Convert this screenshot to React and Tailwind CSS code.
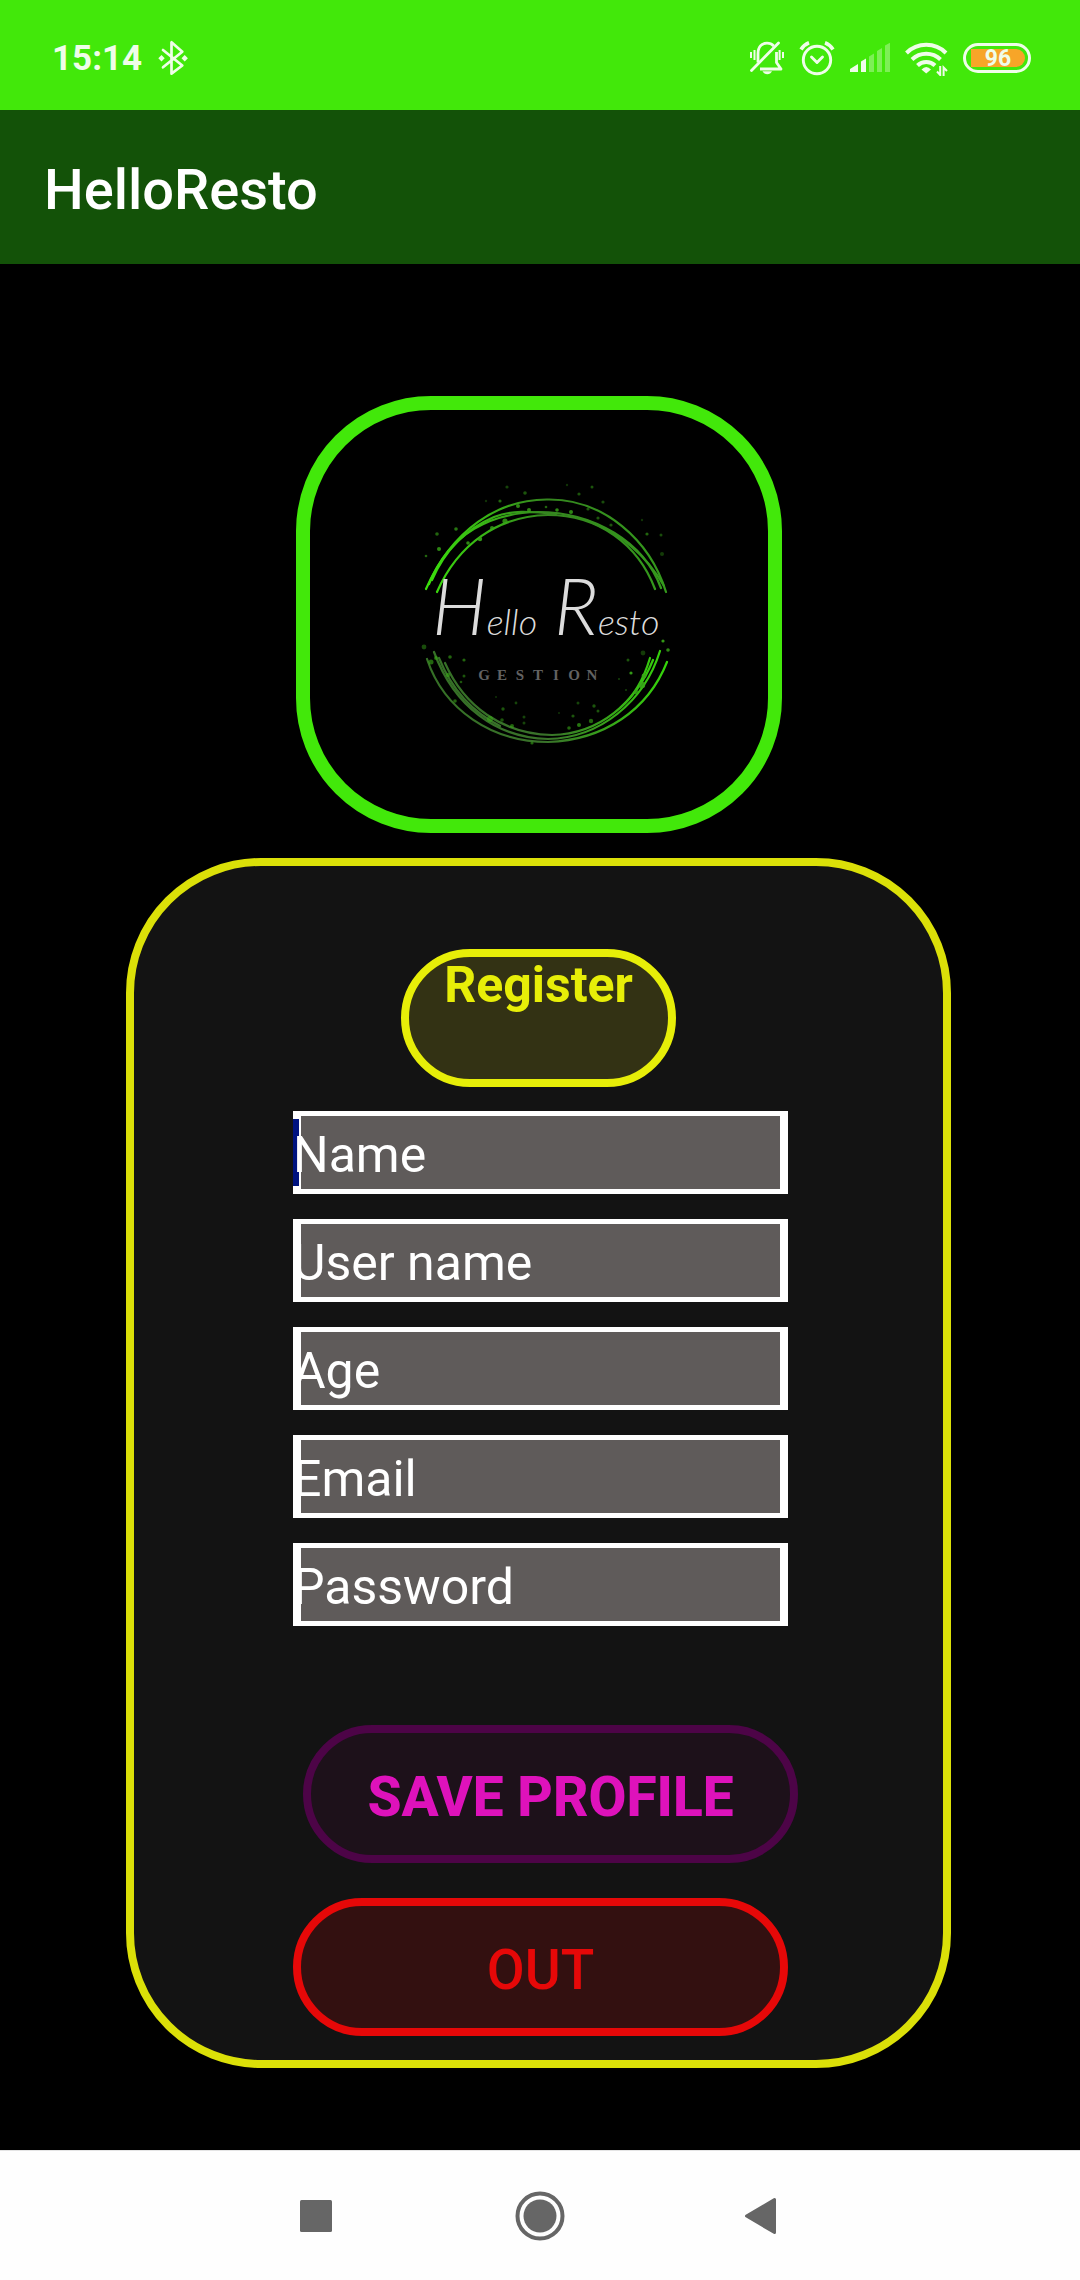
const FIELDS = [
  { id: "name", label: "Name", type: "text", caret: true },
  { id: "username", label: "User name", type: "text" },
  { id: "age", label: "Age", type: "text" },
  { id: "email", label: "Email", type: "email" },
  { id: "password", label: "Password", type: "password" },
];

// Splatter dots round the logo rings: x, y, radius, opacity.
const DOTS = [
  [97, 17, 1.6, 0.4], [115, 23, 1.8, 0.5], [90, 31, 1.6, 0.6], [76, 31, 1.2, 0.3],
  [157, 15, 1.2, 0.3], [182, 17, 1.5, 0.5], [169, 24, 1.6, 0.5], [193, 32, 1.6, 0.45],
  [27, 64, 1.8, 0.6], [46, 59, 1.8, 0.7], [29, 79, 2, 0.8], [16, 86, 1.3, 0.6],
  [232, 50, 1.2, 0.3], [237, 64, 1.6, 0.6], [251, 65, 1.5, 0.45], [252, 84, 2, 0.35],
  [108, 36, 2, 0.8], [119, 40, 2, 0.8], [136, 37, 1.3, 0.6], [147, 40, 1.8, 0.8],
  [161, 42, 2, 0.8], [178, 39, 1.6, 0.5], [188, 48, 1.6, 0.5], [201, 55, 1.6, 0.5],
  [95, 51, 2.6, 0.8], [82, 58, 2, 0.8], [70, 69, 2.2, 0.9], [58, 73, 1.8, 0.8],
  [14, 177, 2.4, 0.45], [26, 188, 2, 0.6], [40, 187, 1.8, 0.6], [54, 190, 1.6, 0.6],
  [38, 205, 2.2, 0.6], [54, 206, 1.5, 0.5], [51, 212, 1.3, 0.5], [21, 192, 2.5, 0.6],
  [253, 171, 1.6, 0.9], [258, 180, 1.8, 0.8], [233, 183, 2.4, 0.35], [218, 190, 1.5, 0.5],
  [221, 203, 1.6, 0.9], [234, 206, 2.4, 0.9], [232, 215, 3.2, 0.9], [226, 222, 2.2, 0.8],
  [209, 209, 1, 0.4], [216, 220, 1, 0.4], [86, 227, 1, 0.3], [106, 233, 1.4, 0.4],
  [93, 239, 1.7, 0.5], [114, 247, 1.5, 0.4], [114, 253, 1.5, 0.4], [80, 249, 3, 0.6],
  [92, 250, 1.8, 0.5], [102, 256, 2, 0.6], [168, 233, 1.5, 0.4], [184, 236, 1.7, 0.5],
  [188, 241, 1.5, 0.5], [163, 246, 1.6, 0.5], [169, 255, 2, 0.7], [181, 251, 2.2, 0.6],
  [159, 258, 1.8, 0.6], [149, 243, 1, 0.3], [122, 273, 1.6, 0.6], [45, 231, 1.8, 0.6],
];

function Logo() {
  return (
    <svg viewBox="0 0 458 409" className="block w-full" role="img" aria-label="Hello Resto Gestion">
      <defs>
        <linearGradient id="topRing" gradientUnits="userSpaceOnUse" x1="16" y1="0" x2="256" y2="0">
          <stop offset="0" stopColor="#3be00c" />
          <stop offset="0.5" stopColor="#35861f" />
          <stop offset="1" stopColor="#349a1c" />
        </linearGradient>
        <linearGradient id="bottomRing" gradientUnits="userSpaceOnUse" x1="16" y1="0" x2="256" y2="0">
          <stop offset="0" stopColor="#357026" />
          <stop offset="0.5" stopColor="#39722a" />
          <stop offset="1" stopColor="#35d40a" />
        </linearGradient>
      </defs>
      <g transform="translate(100 60)">
        <g fill="none" stroke="url(#topRing)" strokeWidth="2.2" strokeLinecap="round">
          <path d="M16 119 C42 60 88 29 138 29.5 C194 29 240 70 256 122" />
          <path d="M19 114 C40 62 82 43 128 42 C184 42 234 72 251 118" />
          <path d="M27 122 C48 74 88 46 138 45 C188 45 228 74 245 119" />
          <path d="M22 110 C36 78 58 58 84 47 C104 39 124 42 146 44" />
          <path d="M176 50 C212 64 238 88 254 116" />
        </g>
        <g fill="none" stroke="url(#bottomRing)" strokeWidth="2.2" strokeLinecap="round">
          <path d="M17 189 C34 240 82 272 138 272 C194 270 238 240 257 192" />
          <path d="M24 182 C44 236 86 268 138 269 C190 268 234 232 250 181" />
          <path d="M35 193 C54 236 92 264 142 265 C190 264 226 232 243 190" />
          <path d="M29 188 C42 220 62 242 90 256" />
          <path d="M240 188 C234 208 224 226 210 238" />
        </g>
        <g fill="#38a918">
          {DOTS.map(([x, y, r, o]) => (
            <circle key={`${x}-${y}`} cx={x} cy={y} r={r} opacity={o} />
          ))}
        </g>
        <g fill="#dcdcdc" fontFamily="Lato, sans-serif" fontStyle="italic" fontWeight="300">
          <text x="22" y="165" fontSize="78">
            H<tspan fontSize="36">ello</tspan>
          </text>
          <text x="144" y="165" fontSize="78">
            R<tspan fontSize="36">esto</tspan>
          </text>
        </g>
        <g fill="#626262" fontFamily="Liberation Serif, serif" fontWeight="700" fontSize="15" textAnchor="middle">
          {["G", "E", "S", "T", "I", "O", "N"].map((c, i) => (
            <text key={c} x={74 + i * 18} y="210">{c}</text>
          ))}
        </g>
      </g>
    </svg>
  );
}

function StatusBar() {
  return (
    <div className="flex h-[110px] items-center justify-between bg-[#42e80a] pt-1.5 pr-[49px] pl-[52px] text-[#effde9]">
      <div className="flex items-center gap-4">
        <span className="pt-0.5 text-[35px] leading-9 font-bold">15:14</span>
        <svg width="31" height="36" viewBox="0 0 31 36" fill="none" stroke="currentColor" strokeWidth="2.7" strokeLinecap="round" strokeLinejoin="round">
          <path d="M5 27.3 24.3 11.7 13.5 2.3 V33.7 L24.3 25.5 5 10" />
          <path d="M3.5 15 6.7 18.3 3.5 21.6 .3 18.3Z M26.7 15 29.9 18.3 26.7 21.6 23.5 18.3Z" fill="currentColor" stroke="none" />
        </svg>
      </div>
      <div className="flex items-center gap-[15px]">
        <svg width="34" height="36" viewBox="0 0 34 36" fill="none" stroke="currentColor" strokeWidth="2.8">
          <path d="M8 22.5V14C8 7 11.5 3.2 17 3.2c3 0 5 1 6.8 2.8" />
          <path d="M26.5 12V22.5L31 29H10" strokeLinejoin="round" />
          <path d="M1.5 30.5 28.5 3" strokeLinecap="round" />
          <path d="M12.5 31.2h9.5q-1.5 3-4.7 3t-4.8-3Z" fill="currentColor" stroke="none" />
          <path d="M1 12v6M4.5 10v10M29.6 10v10M33 12v6" strokeWidth="2" />
        </svg>
        <svg width="36" height="36" viewBox="0 0 36 36" fill="none" stroke="currentColor" strokeWidth="2.9" strokeLinecap="round" strokeLinejoin="round">
          <circle cx="18" cy="20" r="13.7" />
          <path d="M12.5 17 18 22.5 23.5 17" />
          <path d="M2 9.5Q5 4.5 10 2.7M34 9.5Q31 4.5 26 2.7" strokeWidth="3.6" strokeLinecap="butt" />
        </svg>
        <svg width="40" height="36" viewBox="0 0 40 36" fill="currentColor">
          <path d="M0 32V29L8 24V32ZM11 32V21.5L16 18.5V32Z" />
          <path d="M19 32V16.5L24 13.5V32ZM27 32V11L32 8V32ZM35 32V5.5L40 2.7V32Z" opacity="0.35" />
        </svg>
        <svg width="43" height="36" viewBox="0 0 43 36" fill="none" stroke="currentColor" strokeWidth="4">
          <path d="M1.5 13A28 28 0 0 1 41 13" />
          <path d="M7 19.5A20.5 20.5 0 0 1 35.5 19.5" />
          <path d="M12.5 25.5A12.5 12.5 0 0 1 30 25.5" />
          <path d="M16.5 29.5Q21.2 24.5 26 29.5L21.2 33.5Z" fill="currentColor" stroke="none" />
          <path d="M35.2 26V35L32 31.5M38.6 36.5V27.5L42 31" strokeWidth="2" />
        </svg>
        <div className="flex h-[30px] w-[68px] rounded-full border-3 border-current p-[3px] pl-[5px]">
          <span className="flex flex-1 items-center justify-center rounded-l-md rounded-r-full bg-[#f7a528] text-[23px] leading-none font-bold">96</span>
        </div>
      </div>
    </div>
  );
}

function Field({ id, label, type, caret }) {
  return (
    <label
      htmlFor={id}
      className="relative block h-[83px] bg-[#5f5b5a] shadow-[inset_8px_0_0_#fff,inset_-8px_0_0_#fff,inset_0_5px_0_#fff,inset_0_-5px_0_#fff]"
    >
      {caret && <span className="absolute inset-y-2 left-0 w-1.5 bg-[#00137f]" />}
      <input
        id={id}
        type={type}
        aria-label={label}
        placeholder={label}
        className="relative block h-full w-full bg-transparent pt-1 text-[50px] text-white caret-[#00137f] outline-none placeholder:text-white placeholder:opacity-100"
      />
    </label>
  );
}

function NavBar() {
  return (
    <nav className="flex h-[130px] items-center justify-center gap-[174px] border-t border-[#e4e4e4] bg-[#fefefe] text-[#666666]">
      <button type="button" aria-label="Recent apps">
        <svg width="50" height="50" viewBox="0 0 50 50" fill="currentColor">
          <rect x="9" y="9" width="32" height="32" rx="1.5" />
        </svg>
      </button>
      <button type="button" aria-label="Home">
        <svg width="50" height="50" viewBox="0 0 50 50" fill="currentColor">
          <circle cx="25" cy="25" r="22.5" fill="none" stroke="currentColor" strokeWidth="4" />
          <circle cx="25" cy="25" r="16.5" />
        </svg>
      </button>
      <button type="button" aria-label="Back">
        <svg width="50" height="50" viewBox="0 0 50 50" fill="currentColor" stroke="currentColor" strokeWidth="3" strokeLinejoin="round">
          <path d="M7.5 25 35.5 8.5V41.5Z" />
        </svg>
      </button>
    </nav>
  );
}

export default function App() {
  return (
    <div className="flex min-h-screen flex-col bg-black font-[Roboto,sans-serif]">
      <StatusBar />
      <header className="flex h-[154px] items-center bg-[#135208] px-11 pt-1.5">
        <h1 className="text-[56px] leading-none font-medium text-white">HelloResto</h1>
      </header>
      <main className="flex flex-1 flex-col items-center gap-[25px] pt-[132px] pr-[3px] pb-20">
        <div className="w-full max-w-[486px] rounded-[135px] border-14 border-[#42e80a]">
          <Logo />
        </div>
        <section className="flex w-full max-w-[825px] flex-col items-center gap-6 rounded-[135px] border-8 border-[#dbe008] bg-[#131313] pt-[83px] pb-6">
          <h2 className="h-[138px] w-full max-w-[275px] rounded-full border-8 border-[#e7ee08] bg-[#333214] text-center text-[50px] leading-[56px] font-bold text-[#e7ee08]">
            Register
          </h2>
          <form className="w-full max-w-[499px] pl-1" onSubmit={(e) => e.preventDefault()}>
            <div className="flex flex-col gap-[25px]">
              {FIELDS.map((f) => (
                <Field key={f.id} {...f} />
              ))}
            </div>
            <div className="mt-[99px] flex flex-col gap-[35px] text-[55px] leading-none">
              <button
                type="submit"
                className="-mr-2.5 ml-2.5 h-[138px] rounded-full border-8 border-[#4d0447] bg-[#1d111a] pt-1.5 font-extrabold text-[#de12bb]"
              >
                SAVE PROFILE
              </button>
              <button
                type="button"
                className="h-[138px] rounded-full border-8 border-[#e60808] bg-[#331010] pt-1.5 font-medium text-[#e60808]"
              >
                OUT
              </button>
            </div>
          </form>
        </section>
      </main>
      <NavBar />
    </div>
  );
}
